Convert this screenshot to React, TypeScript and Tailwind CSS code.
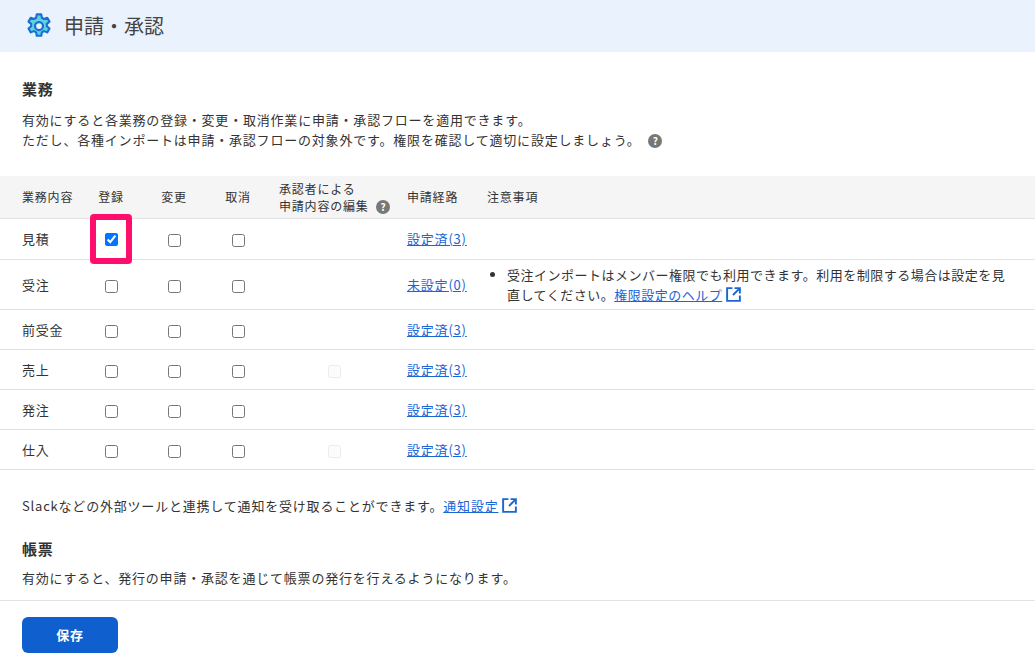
import React from "react";

const Ext = () => (
  <svg width="17" height="17" viewBox="0 0 16 16" className="inline-block ml-[3px] -mt-[3px]" fill="none" stroke="#1a66d6" strokeWidth="1.8">
    <path d="M7 2H2v12h12V9" />
    <path d="M9 2h5v5M14 2L7.5 8.5" />
  </svg>
);
const Help = () => (
  <span className="inline-flex items-center justify-center w-[14px] h-[14px] rounded-full bg-[#777] text-white text-[10px] font-bold leading-none tracking-normal">?</span>
);
const Cb = ({ checked = false, disabled = false }: { checked?: boolean; disabled?: boolean }) => (
  <input type="checkbox" defaultChecked={checked} disabled={disabled} className={"w-[13px] h-[13px] align-middle " + (disabled ? "opacity-40" : "")} />
);

const rows = [
  { n: "見積", reg: true, edit: false, route: "設定済(3)", h: "h-[41px]" },
  { n: "受注", edit: false, route: "未設定(0)", h: "h-[50px]", note: true },
  { n: "前受金", edit: false, route: "設定済(3)", h: "h-[40px]" },
  { n: "売上", edit: true, route: "設定済(3)", h: "h-[40px]" },
  { n: "発注", edit: false, route: "設定済(3)", h: "h-[40px]" },
  { n: "仕入", edit: true, route: "設定済(3)", h: "h-[40px]" },
];

export default function App() {
  return (
    <div className="w-[1035px] h-[669px] bg-white text-[#333] overflow-hidden tracking-[0.8px]" style={{ fontFamily: '"Noto Sans CJK JP","Noto Sans",sans-serif' }}>
      <div className="h-[52px] bg-[#eaf2fd] flex items-center pl-[24px] gap-[10px]">
        <svg width="30" height="30" viewBox="0 0 24 24">
          <path d="M10.2 1.5h3.6l.5 2.7 1.7 1 2.6-1 1.8 3.1-2.1 1.8v1.9l2.1 1.8-1.8 3.1-2.6-1-1.7 1-.5 2.7h-3.6l-.5-2.7-1.7-1-2.6 1-1.8-3.1 2.1-1.8V9.1L3.6 7.3l1.8-3.1 2.6 1 1.7-1z" transform="translate(0 1.2)" fill="#5fd3dc" stroke="#1a6fd6" strokeWidth="1.7" strokeLinejoin="round" />
          <circle cx="12" cy="12" r="3.2" fill="#eaf2fd" stroke="#1a6fd6" strokeWidth="1.8" />
        </svg>
        <span className="text-[20px] text-[#444] tracking-normal">申請・承認</span>
      </div>
      <div className="px-[22px] pt-[26px]">
        <div className="text-[15px] font-bold">業務</div>
        <div className="mt-[9px] text-[13px] leading-[20px]">
          <div>有効にすると各業務の登録・変更・取消作業に申請・承認フローを適用できます。</div>
          <div>ただし、各種インポートは申請・承認フローの対象外です。権限を確認して適切に設定しましょう。 <span className="ml-[4px]"><Help /></span></div>
        </div>
      </div>
      <table className="mt-[26px] w-full text-[13px] border-collapse table-fixed">
        <colgroup>
          <col className="w-[80px]" /><col className="w-[62px]" /><col className="w-[64px]" /><col className="w-[64px]" />
          <col className="w-[128px]" /><col className="w-[80px]" /><col />
        </colgroup>
        <thead>
          <tr className="h-[43px] bg-[#f5f5f5] border-b border-[#e2e2e2] text-[12px]">
            <th className="text-left font-normal pl-[22px]">業務内容</th>
            <th className="text-center font-normal">登録</th>
            <th className="text-center font-normal">変更</th>
            <th className="text-center font-normal">取消</th>
            <th className="text-left font-normal pl-[9px] leading-[17px]">承認者による<br />申請内容の編集 <span className="ml-[4px]"><Help /></span></th>
            <th className="text-left font-normal pl-[9px]">申請経路</th>
            <th className="text-left font-normal pl-[9px]">注意事項</th>
          </tr>
        </thead>
        <tbody>
          {rows.map((r) => (
            <tr key={r.n} className={r.h + " border-b border-[#e2e2e2]"}>
              <td className="pl-[22px]">{r.n}</td>
              <td className="text-center">
                {r.reg ? (
                  <span className="inline-flex items-center justify-center w-[42px] h-[50px] border-[6px] border-[#ff0f6b] rounded-[4px] -my-[6px] align-middle"><Cb checked /></span>
                ) : <Cb />}
              </td>
              <td className="text-center"><Cb /></td>
              <td className="text-center"><Cb /></td>
              <td className="text-center">{r.edit ? <Cb disabled /> : null}</td>
              <td className="pl-[9px]"><a className="text-[#1a66d6] underline">{r.route}</a></td>
              <td className="pl-[9px] pr-[20px]">
                {r.note && (
                  <ul className="list-disc pl-[20px] leading-[20px] tracking-[0.5px]">
                    <li>受注インポートはメンバー権限でも利用できます。利用を制限する場合は設定を見直してください。<a className="text-[#1a66d6] underline">権限設定のヘルプ</a><Ext /></li>
                  </ul>
                )}
              </td>
            </tr>
          ))}
        </tbody>
      </table>
      <div className="px-[22px] pt-[26px] text-[13px]">
        Slackなどの外部ツールと連携して通知を受け取ることができます。<a className="text-[#1a66d6] underline">通知設定</a><Ext />
      </div>
      <div className="px-[22px] pt-[22px] pb-[12px] border-b border-[#e2e2e2]">
        <div className="text-[15px] font-bold">帳票</div>
        <div className="mt-[8px] text-[13px]">有効にすると、発行の申請・承認を通じて帳票の発行を行えるようになります。</div>
      </div>
      <div className="px-[22px] pt-[16px]">
        <button className="w-[96px] h-[36px] rounded-[6px] bg-[#0f5fce] text-white text-[13px] font-bold">保存</button>
      </div>
    </div>
  );
}
